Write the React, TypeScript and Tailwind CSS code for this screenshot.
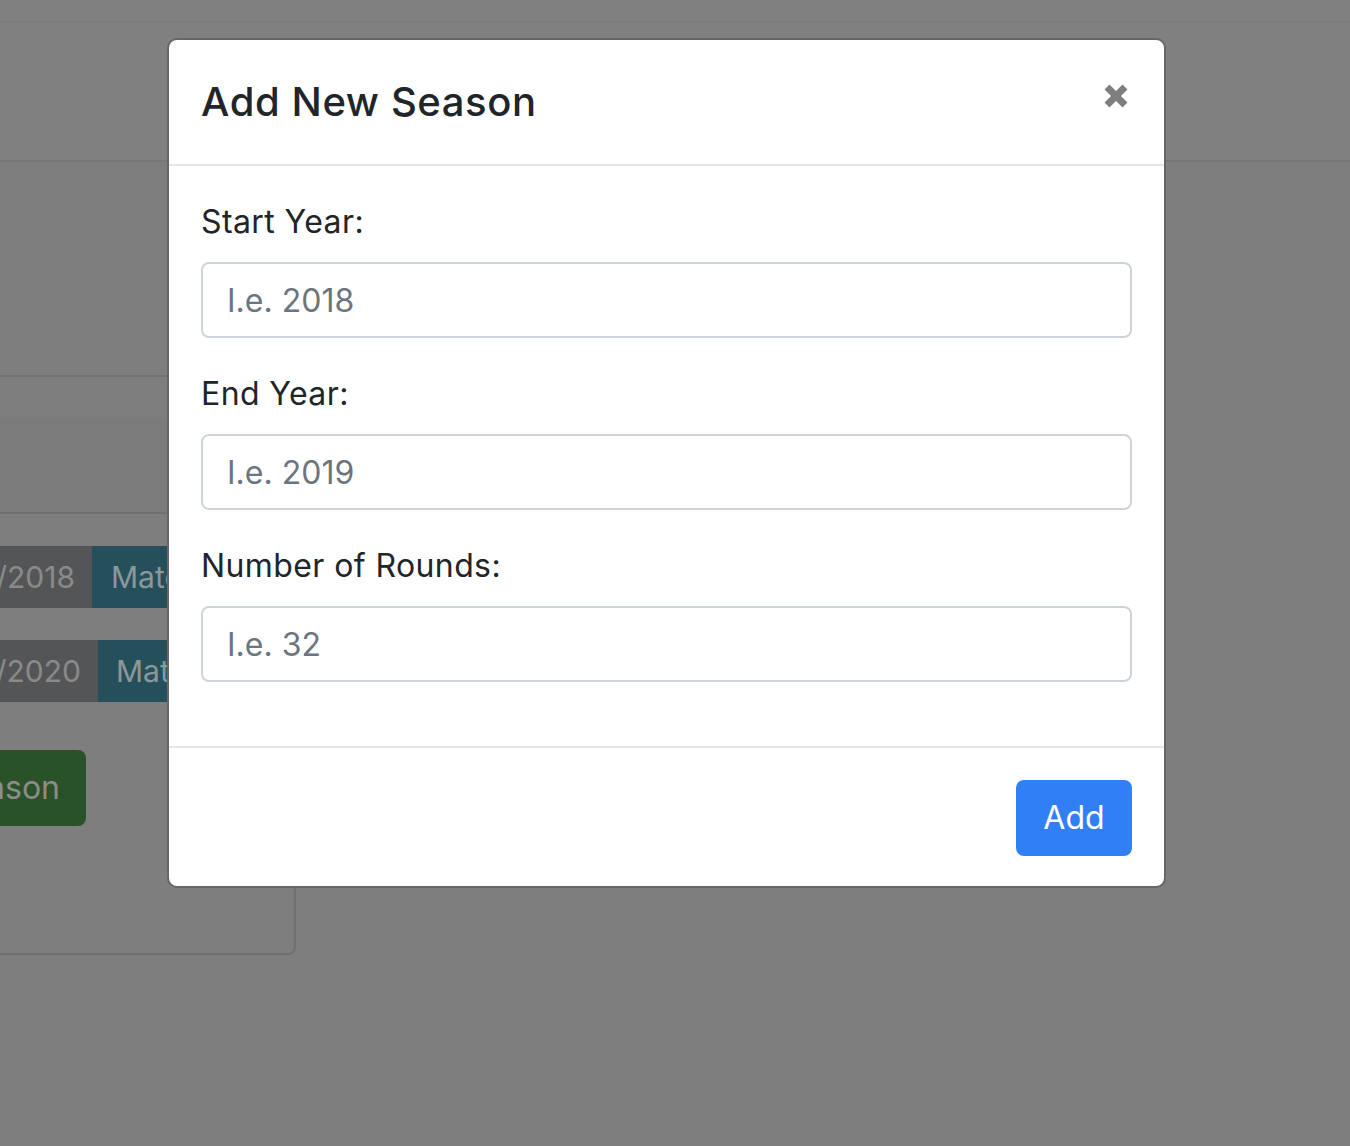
const fields = [
  { label: "Start Year:", placeholder: "I.e. 2018" },
  { label: "End Year:", placeholder: "I.e. 2019" },
  { label: "Number of Rounds:", placeholder: "I.e. 32" },
];

function CloseIcon() {
  return (
    <svg width="24" height="24" viewBox="0 0 24 24" className="block">
      <path d="M3 3 L21 21 M21 3 L3 21" stroke="#7f7f7f" strokeWidth="7" strokeLinecap="butt" />
    </svg>
  );
}

export default function App() {
  return (
    <div
      className="relative h-[1146px] w-[1350px] overflow-hidden bg-[#7e7e7e] text-[#212529]"
      style={{ fontFamily: "Inter, 'Open Sans', sans-serif" }}
    >
      {/* page behind the backdrop */}
      <div className="flex flex-col">
        <div className="h-[22px] border-b border-[#7b7b7b] bg-[#808080]" />
        <div className="h-[140px] border-b-2 border-[#777777] bg-[#808080]" />
        <div className="mt-[213px] ml-[-40px] w-[336px] rounded-b-[8px] border-2 border-[#707070]">
          <div className="h-[40px]" />
          <div className="h-[97px] border-b-2 border-[#707070] bg-[#7b7b7b]" />
          <div className="flex flex-col gap-[32px] pt-[32px]">
            <div className="flex h-[62px] text-[30px] leading-[62px]">
              <div className="flex w-[130px] justify-end overflow-hidden bg-[#545557] pr-[17px] whitespace-nowrap text-[#8a8a8a]">
                <span>2017/2018</span>
              </div>
              <div className="flex-1 bg-[#25505b] pl-[19px] text-[#8c979b]">Match</div>
            </div>
            <div className="flex h-[62px] text-[30px] leading-[62px]">
              <div className="flex w-[136px] justify-end overflow-hidden bg-[#545557] pr-[17px] whitespace-nowrap text-[#8a8a8a]">
                <span>2019/2020</span>
              </div>
              <div className="flex-1 bg-[#25505b] pl-[18px] text-[#8c979b]">Match</div>
            </div>
          </div>
          <div className="mt-[48px] flex">
            <div className="flex h-[76px] w-[124px] justify-end overflow-hidden rounded-[8px] bg-[#2a5229] pr-[26px] text-[32px] whitespace-nowrap leading-[76px] text-[#8c8c8c]">
              <span>Season</span>
            </div>
          </div>
          <div className="h-[127px]" />
        </div>
      </div>

      {/* modal */}
      <div className="absolute left-[167px] top-[38px] w-[999px] rounded-[10px] border-2 border-[#666666] bg-white">
        <div className="flex items-start justify-between border-b-2 border-[#e3e6ea] p-[32px]">
          <h5 className="text-[40px] leading-[60px] font-medium tracking-[0.6px] text-[#212529]">Add New Season</h5>
          <button className="mt-[12px] mr-[4px]" aria-label="Close">
            <CloseIcon />
          </button>
        </div>
        <div className="flex flex-col gap-[32px] p-[32px] pb-[64px]">
          {fields.map((f) => (
            <div key={f.label} className="flex flex-col gap-[16px]">
              <label className="text-[32px] leading-[48px] tracking-[0.4px] text-[#212529]">{f.label}</label>
              <input
                placeholder={f.placeholder}
                className="h-[76px] w-full rounded-[8px] border-2 border-[#ced4da] px-[24px] text-[32px] text-[#495057] outline-none placeholder:text-[#6c757d]"
              />
            </div>
          ))}
        </div>
        <div className="flex justify-end border-t-2 border-[#e3e6ea] px-[32px] pt-[32px] pb-[30px]">
          <button className="h-[76px] w-[116px] rounded-[8px] bg-[#317ff5] text-[32px] text-white">Add</button>
        </div>
      </div>
    </div>
  );
}
